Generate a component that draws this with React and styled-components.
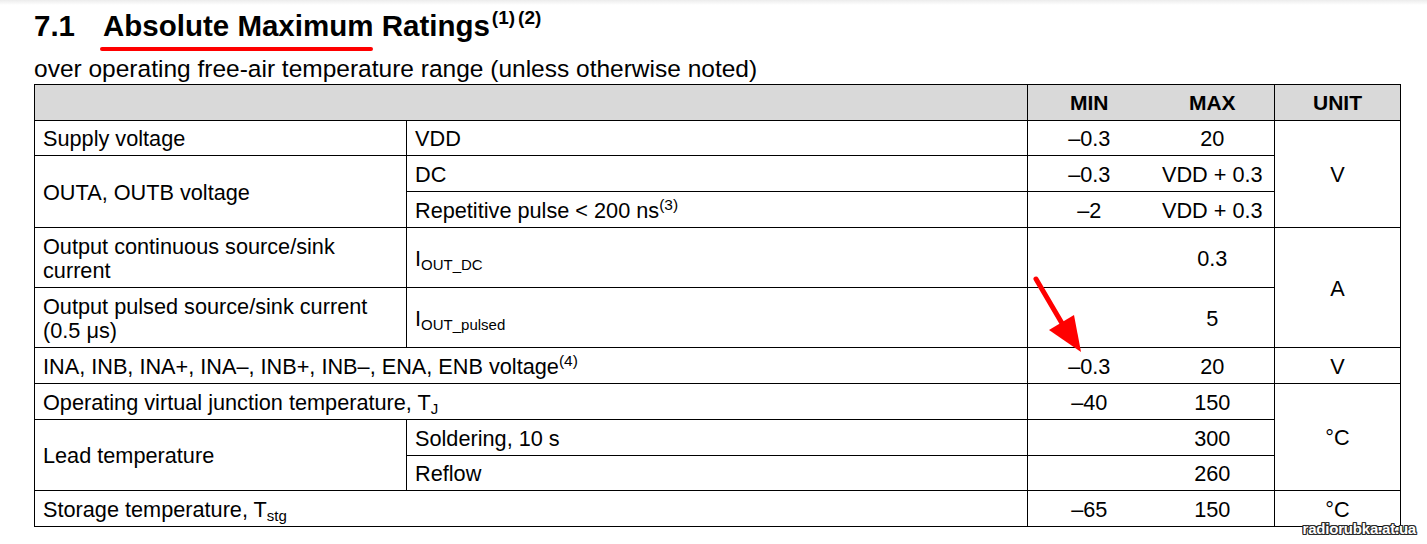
import React from 'react'
import styled, { createGlobalStyle } from 'styled-components'

const GlobalStyle = createGlobalStyle`
  html, body {
    margin: 0;
    padding: 0;
    background: #fff;
  }
  body {
    font-family: 'Liberation Sans', Arial, sans-serif;
    color: #000;
  }
`

const Page = styled.div`
  position: relative;
  width: 1427px;
  height: 544px;
  box-sizing: border-box;
  padding: 8px 0 0 34px;
  overflow: hidden;
  background: linear-gradient(#ececec, #fff 5px);
`

const Heading = styled.h2`
  display: flex;
  align-items: baseline;
  margin: 0;
  font-size: 29.5px;
  line-height: 36px;
  font-weight: bold;
`

const SectionNo = styled.span`
  width: 69px;
`

const Marked = styled.span`
  position: relative;
  &::after {
    content: '';
    position: absolute;
    left: -3px;
    right: 0;
    bottom: -9px;
    height: 4px;
    border-radius: 3px;
    background: #f00;
  }
`

const Note = styled.sup`
  font-size: ${({ size }) => size || 15.5}px;
  line-height: 0;
  vertical-align: ${({ raise }) => raise || 8}px;
  margin-left: ${({ gap }) => gap || 0}px;
`

const Sub = styled.sub`
  font-size: 15px;
  line-height: 0;
  vertical-align: -4px;
`

const Subtitle = styled.p`
  margin: 11px 0 0;
  font-size: 24.5px;
  line-height: 28px;
`

const Table = styled.table`
  border-collapse: collapse;
  table-layout: fixed;
  width: 1366px;
  margin-top: 1px;
  font-size: 21.7px;
  line-height: 24px;
`

const Row = styled.tr`
  height: ${({ h }) => h || 36}px;
`

const Head = styled.th`
  background: #d9d9d9;
  border: 1px solid #000;
  font-size: 21px;
  font-weight: bold;
  text-align: center;
  padding: 1px 0 0;
  ${({ open }) => open === 'right' && 'border-right: none;'}
  ${({ open }) => open === 'left' && 'border-left: none;'}
`

const Cell = styled.td`
  border: 1px solid #000;
  padding: 2px 8px 0;
  vertical-align: middle;
  white-space: nowrap;
  text-align: ${({ center }) => (center ? 'center' : 'left')};
  ${({ open }) => open === 'right' && 'border-right: none;'}
  ${({ open }) => open === 'left' && 'border-left: none;'}
`

const Arrow = styled.svg`
  position: absolute;
  left: 1020px;
  top: 270px;
  pointer-events: none;
`

const Watermark = styled.div`
  position: absolute;
  right: 11px;
  bottom: 7px;
  font-size: 15px;
  font-weight: bold;
  letter-spacing: -0.2px;
  color: #fff;
  text-shadow: -1px -1px 0 #2a2a2a, 1px -1px 0 #2a2a2a, -1px 1px 0 #2a2a2a,
    1px 1px 0 #2a2a2a, 0 -1px 0 #2a2a2a, 0 1px 0 #2a2a2a, -1px 0 0 #2a2a2a,
    1px 0 0 #2a2a2a;
`

const Limits = ({ min, max }) => (
  <>
    <Cell center open='right'>{min}</Cell>
    <Cell center open='left'>{max}</Cell>
  </>
)

const App = () => {
  return (
    <Page>
      <GlobalStyle />
      <Heading>
        <SectionNo>7.1</SectionNo>
        <span>
          <Marked>Absolute Maximum</Marked> Ratings
          <Note size={19} raise={12} gap={2}>(1)</Note>
          <Note size={19} raise={12} gap={3}>(2)</Note>
        </span>
      </Heading>
      <Subtitle>over operating free-air temperature range (unless otherwise noted)</Subtitle>
      <Table>
        <colgroup>
          <col style={{ width: 372 }} />
          <col style={{ width: 621 }} />
          <col style={{ width: 123 }} />
          <col style={{ width: 124 }} />
          <col style={{ width: 126 }} />
        </colgroup>
        <tbody>
          <Row>
            <Head colSpan={2} />
            <Head open='right'>MIN</Head>
            <Head open='left'>MAX</Head>
            <Head>UNIT</Head>
          </Row>
          <Row h={35}>
            <Cell>Supply voltage</Cell>
            <Cell>VDD</Cell>
            <Limits min='–0.3' max='20' />
            <Cell center rowSpan={3}>V</Cell>
          </Row>
          <Row>
            <Cell rowSpan={2}>OUTA, OUTB voltage</Cell>
            <Cell>DC</Cell>
            <Limits min='–0.3' max='VDD + 0.3' />
          </Row>
          <Row>
            <Cell>
              Repetitive pulse &lt; 200 ns<Note>(3)</Note>
            </Cell>
            <Limits min='–2' max='VDD + 0.3' />
          </Row>
          <Row h={60}>
            <Cell>
              Output continuous source/sink
              <br />
              current
            </Cell>
            <Cell>
              I<Sub>OUT_DC</Sub>
            </Cell>
            <Limits min='' max='0.3' />
            <Cell center rowSpan={2}>A</Cell>
          </Row>
          <Row h={60}>
            <Cell>
              Output pulsed source/sink current
              <br />
              (0.5 μs)
            </Cell>
            <Cell>
              I<Sub>OUT_pulsed</Sub>
            </Cell>
            <Limits min='' max='5' />
          </Row>
          <Row>
            <Cell colSpan={2}>
              INA, INB, INA+, INA–, INB+, INB–, ENA, ENB voltage<Note>(4)</Note>
            </Cell>
            <Limits min='–0.3' max='20' />
            <Cell center>V</Cell>
          </Row>
          <Row>
            <Cell colSpan={2}>
              Operating virtual junction temperature, T<Sub>J</Sub>
            </Cell>
            <Limits min='–40' max='150' />
            <Cell center rowSpan={3}>°C</Cell>
          </Row>
          <Row>
            <Cell rowSpan={2}>Lead temperature</Cell>
            <Cell>Soldering, 10 s</Cell>
            <Limits min='' max='300' />
          </Row>
          <Row h={35}>
            <Cell>Reflow</Cell>
            <Limits min='' max='260' />
          </Row>
          <Row>
            <Cell colSpan={2}>
              Storage temperature, T<Sub>stg</Sub>
            </Cell>
            <Limits min='–65' max='150' />
            <Cell center>°C</Cell>
          </Row>
        </tbody>
      </Table>
      <Arrow width='70' height='90' viewBox='1020 270 70 90'>
        <line x1='1036' y1='279' x2='1063' y2='325' stroke='#f00' strokeWidth='5' strokeLinecap='round' />
        <polygon points='1049,330 1074,315 1081,352' fill='#f00' />
      </Arrow>
      <Watermark>radiorubka.at.ua</Watermark>
    </Page>
  )
}

export default App
